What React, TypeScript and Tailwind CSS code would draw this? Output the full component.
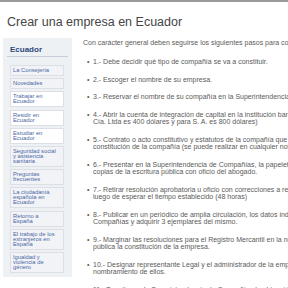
import React from 'react';

const menu: { lines: string[]; white?: boolean }[] = [
    { lines: ['La Consejería'] },
    { lines: ['Novedades'] },
    { lines: ['Trabajar en', 'Ecuador'], white: true },
    { lines: ['Residir en', 'Ecuador'], white: true },
    { lines: ['Estudiar en', 'Ecuador'], white: true },
    { lines: ['Seguridad social', 'y asistencia', 'sanitaria'] },
    { lines: ['Preguntas', 'frecuentes'] },
    { lines: ['La ciudadanía', 'española en', 'Ecuador'] },
    { lines: ['Retorno a', 'España'] },
    { lines: ['El trabajo de los', 'extranjeros en', 'España'] },
    { lines: ['Igualdad y', 'violencia de', 'género'] },
];

const steps: string[][] = [
    ['1.- Debe decidir qué tipo de compañía se va a constituir.'],
    ['2.- Escoger el nombre de su empresa.'],
    ['3.- Reservar el nombre de su compañía en la Superintendencia de Compañías.'],
    ['4.- Abrir la cuenta de integración de capital en la institución bancaria de su elección (el monto mínimo para', 'Cía. Ltda es 400 dólares y para S. A. es 800 dólares)'],
    ['5.- Contrato o acto constitutivo y estatutos de la compañía que serán elevados a escritura pública de', 'constitución de la compañía (se puede realizar en cualquier notaría)'],
    ['6.- Presentar en la Superintendencia de Compañías, la papeleta de la cuenta de integración de capital y', 'copias de la escritura pública con oficio del abogado.'],
    ['7.- Retirar resolución aprobatoria u oficio con correcciones a realizar en la Superintendencia de Compañías', 'luego de esperar el tiempo establecido (48 horas)'],
    ['8.- Publicar en un periódico de amplia circulación, los datos indicados en el extracto emitido por la Superintendencia de', 'Compañías y adquirir 3 ejemplares del mismo.'],
    ['9.- Marginar las resoluciones para el Registro Mercantil en la notaría donde se realizó la escritura', 'pública la constitución de la empresa.'],
    ['10.- Designar representante Legal y el administrador de la empresa e inscribir en el Registro Mercantil el', 'nombramiento de ellos.'],
    ['11.- Tramitar en la Superintendencia de Compañías la obtención del RUC de la empresa.'],
];

export default function App() {
    return (
        <div className="w-[288px] h-[288px] overflow-hidden bg-white border-t-2 border-[#9a9a9a]" style={{ fontFamily: '"Liberation Sans", Arial, sans-serif' }}>
            <div className="flex items-center h-[36px] pl-[7px] pt-[4px]">
                <h1 className="text-[12.5px] text-[#454545] whitespace-nowrap">Crear una empresa en Ecuador</h1>
            </div>
            <div className="flex">
                <div className="w-[69px] h-[239px] shrink-0 ml-[3px] bg-[#eef1f4] pl-[4px] pr-[4px] pt-[7px]">
                    <div className="text-[8px] leading-[9px] font-bold text-[#2d4a7e] pb-[2px] pl-[3px] border-b border-[#c6cdd8] mb-[8px]">Ecuador</div>
                    <div className="flex flex-col gap-[2.2px] ml-[3px] w-[54px]">
                        {menu.map(m => (
                            <div
                                key={m.lines.join(' ')}
                                className={`border border-[#dcdfe5] px-[2px] py-[2px] text-[5.8px] leading-[5px] text-[#4a67a6] whitespace-nowrap ${m.white ? 'bg-white' : 'bg-[#f2f3f6]'}`}
                            >
                                {m.lines.map(l => <div key={l}>{l}</div>)}
                            </div>
                        ))}
                    </div>
                </div>
                <div className="flex-1 min-w-0 pl-[11px] pt-[1px] text-[#5a5a5a]">
                    <p className="whitespace-nowrap text-[7px] leading-[8px]">Con carácter general deben seguirse los siguientes pasos para constituir una empresa:</p>
                    <ul className="mt-[11px] flex flex-col gap-[10px] text-[7px] leading-[7.5px]">
                        {steps.map(s => (
                            <li key={s[0]} className="flex">
                                <span className="w-[10px] shrink-0 pl-[4px]">•</span>
                                <div className="whitespace-nowrap">
                                    {s.map(l => <div key={l}>{l}</div>)}
                                </div>
                            </li>
                        ))}
                    </ul>
                </div>
            </div>
        </div>
    );
}
